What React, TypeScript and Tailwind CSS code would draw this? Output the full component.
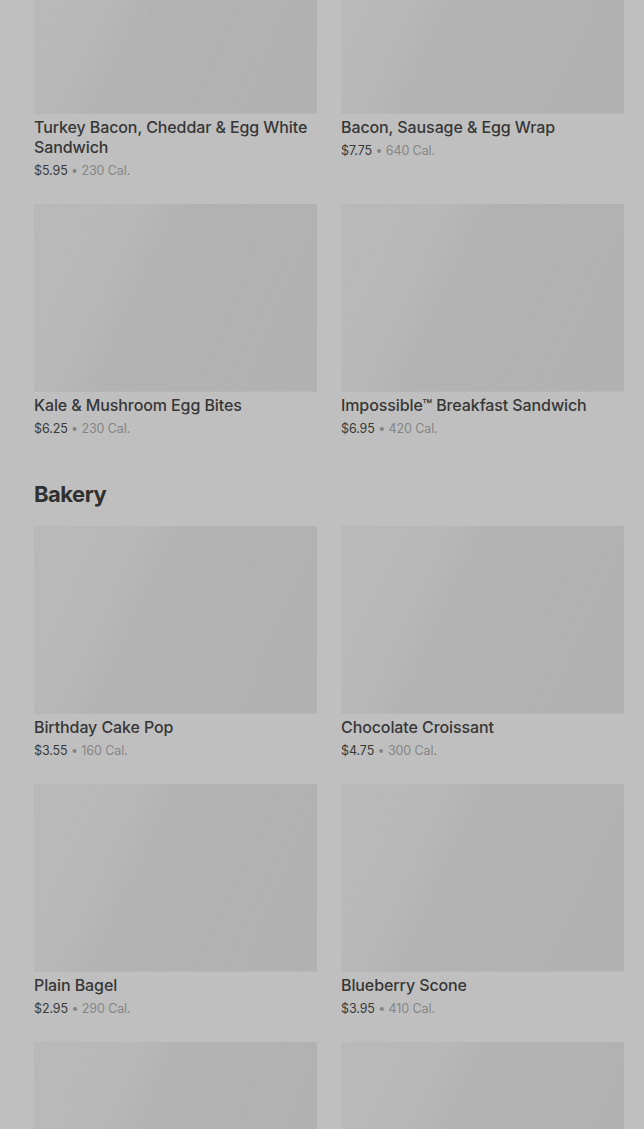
import React from 'react';

interface MenuItem {
  name?: string;
  price?: string;
  cal?: string;
}

const breakfast: MenuItem[] = [
  { name: 'Turkey Bacon, Cheddar & Egg White Sandwich', price: '$5.95', cal: '230 Cal.' },
  { name: 'Bacon, Sausage & Egg Wrap', price: '$7.75', cal: '640 Cal.' },
  { name: 'Kale & Mushroom Egg Bites', price: '$6.25', cal: '230 Cal.' },
  { name: 'Impossible™ Breakfast Sandwich', price: '$6.95', cal: '420 Cal.' },
];

const bakery: MenuItem[] = [
  { name: 'Birthday Cake Pop', price: '$3.55', cal: '160 Cal.' },
  { name: 'Chocolate Croissant', price: '$4.75', cal: '300 Cal.' },
  { name: 'Plain Bagel', price: '$2.95', cal: '290 Cal.' },
  { name: 'Blueberry Scone', price: '$3.95', cal: '410 Cal.' },
  {},
  {},
];

const ItemCard = ({ item }: { item: MenuItem }) => (
  <div className="mb-6">
    <div className="h-[187px] w-full bg-[linear-gradient(115deg,#b9b9b9_0%,#b8b8b8_28%,#b2b2b2_42%,#b1b1b1_100%)] shadow-[0_1px_0_#b6b6b6]" />
    {item.name && (
      <>
        <p className="pt-1 text-[16px] leading-5 font-medium tracking-[-0.1px] text-[#373737]">{item.name}</p>
        <p className="mt-1 mb-[-1px] text-[12.5px] leading-5 tracking-[-0.1px] text-[#3a3a3a]">
          {item.price}
          <span className="text-[#858585]"> • {item.cal}</span>
        </p>
      </>
    )}
  </div>
);

export default function App() {
  return (
    <div className="h-[1129px] overflow-hidden bg-[#bfbfbf] font-['Inter',sans-serif]">
      <div className="-mt-[74px] pl-[34px] pr-[20px]">
        <div className="grid grid-cols-2 gap-x-6">
          {breakfast.map((item, i) => (
            <ItemCard key={i} item={item} />
          ))}
        </div>

        <h2 className="mt-[18px] mb-[18px] text-[22px] leading-7 font-bold tracking-[-0.5px] text-[#303030]">
          Bakery
        </h2>

        <div className="grid grid-cols-2 gap-x-6">
          {bakery.map((item, i) => (
            <ItemCard key={i} item={item} />
          ))}
        </div>
      </div>
    </div>
  );
}
